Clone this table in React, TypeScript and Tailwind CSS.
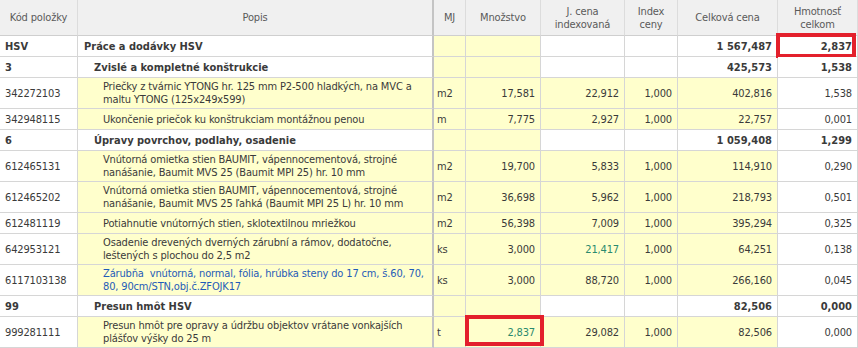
import React from "react";

type Row = {
  kind: "sec" | "item";
  code: string;
  level?: number;
  desc: string[];
  descBlue?: boolean;
  mj?: string;
  qty?: string;
  qtyGreen?: boolean;
  qtyBox?: boolean;
  price?: string;
  priceGreen?: boolean;
  idx?: string;
  total: string;
  weight: string;
  weightBox?: boolean;
};

const rows: Row[] = [
  { kind: "sec", code: "HSV", level: 0, desc: ["Práce a dodávky HSV"], total: "1 567,487", weight: "2,837", weightBox: true },
  { kind: "sec", code: "3", level: 1, desc: ["Zvislé a kompletné konštrukcie"], total: "425,573", weight: "1,538" },
  { kind: "item", code: "342272103", desc: ["Priečky z tvárnic YTONG hr. 125 mm P2-500 hladkých, na MVC a", "maltu YTONG (125x249x599)"], mj: "m2", qty: "17,581", price: "22,912", idx: "1,000", total: "402,816", weight: "1,538" },
  { kind: "item", code: "342948115", desc: ["Ukončenie priečok ku konštrukciam montážnou penou"], mj: "m", qty: "7,775", price: "2,927", idx: "1,000", total: "22,757", weight: "0,001" },
  { kind: "sec", code: "6", level: 1, desc: ["Úpravy povrchov, podlahy, osadenie"], total: "1 059,408", weight: "1,299" },
  { kind: "item", code: "612465131", desc: ["Vnútorná omietka stien BAUMIT, vápennocementová, strojné", "nanášanie, Baumit MVS 25 (Baumit MPI 25) hr. 10 mm"], mj: "m2", qty: "19,700", price: "5,833", idx: "1,000", total: "114,910", weight: "0,290" },
  { kind: "item", code: "612465202", desc: ["Vnútorná omietka stien BAUMIT, vápennocementová, strojné", "nanášanie, Baumit MVS 25 ľahká (Baumit MPI 25 L) hr. 10 mm"], mj: "m2", qty: "36,698", price: "5,962", idx: "1,000", total: "218,793", weight: "0,501" },
  { kind: "item", code: "612481119", desc: ["Potiahnutie vnútorných stien, sklotextilnou mriežkou"], mj: "m2", qty: "56,398", price: "7,009", idx: "1,000", total: "395,294", weight: "0,325" },
  { kind: "item", code: "642953121", desc: ["Osadenie drevených dverných zárubní a rámov, dodatočne,", "leštených s plochou do 2,5 m2"], mj: "ks", qty: "3,000", price: "21,417", priceGreen: true, idx: "1,000", total: "64,251", weight: "0,138" },
  { kind: "item", code: "6117103138", desc: ["Zárubňa  vnútorná, normal, fólia, hrúbka steny do 17 cm, š.60, 70,", "80, 90cm/STN,obj.č.ZFOJK17"], descBlue: true, mj: "ks", qty: "3,000", price: "88,720", idx: "1,000", total: "266,160", weight: "0,045" },
  { kind: "sec", code: "99", level: 1, desc: ["Presun hmôt HSV"], total: "82,506", weight: "0,000" },
  { kind: "item", code: "999281111", desc: ["Presun hmôt pre opravy a údržbu objektov vrátane vonkajších", "plášťov výšky do 25 m"], mj: "t", qty: "2,837", qtyGreen: true, qtyBox: true, price: "29,082", idx: "1,000", total: "82,506", weight: "0,000" },
];

const cellBase = "border-r border-b border-[#d6d6d6] flex items-center overflow-hidden whitespace-pre";
const Y = "bg-[#ffffcc]";
const W = "bg-white";

function Cell({ className, children, h }: { className: string; children?: React.ReactNode; h: string }) {
  return <div className={`${cellBase} ${h} ${className}`}>{children}</div>;
}

export default function App() {
  return (
    <div
      className="w-[858px] h-[348px] overflow-hidden bg-white text-[#3a3a3a] text-[11px] leading-[13px] tracking-[-0.15px]"
      style={{ fontFamily: "Tahoma, 'DejaVu Sans Condensed', 'DejaVu Sans', sans-serif", fontStretch: "condensed" }}
    >
      <div className="grid grid-cols-[78px_356px_32px_75px_84px_53px_100px_80px]">
        {[
          ["Kód položky"],
          ["Popis"],
          ["MJ"],
          ["Množstvo"],
          ["J. cena", "indexovaná"],
          ["Index", "ceny"],
          ["Celková cena"],
          ["Hmotnosť", "celkom"],
        ].map((lines, i) => (
          <div
            key={i}
            className={`h-[36px] bg-[#f0f0f0] border-b border-[#cfcfcf] ${i === 1 ? "border-r-2 border-r-[#c4c4c4]" : "border-r border-r-[#dcdcdc]"} flex flex-col items-center justify-center text-center text-[#5a5a5a]`}
          >
            {lines.map((l, j) => (
              <span key={j}>{l}</span>
            ))}
          </div>
        ))}

        {rows.map((r, i) => {
          const h = r.desc.length > 1 ? "h-[31px]" : "h-[21px]";
          const sec = r.kind === "sec";
          const pl = sec ? (r.level === 0 ? "pl-[6px]" : "pl-[16px]") : "pl-[25px]";
          const bold = sec ? "font-bold tracking-normal" : "";
          return (
            <React.Fragment key={i}>
              <Cell h={h} className={`${W} pl-[5px] ${bold}`}>
                {r.code}
              </Cell>
              <div
                className={`${h} border-b border-[#d6d6d6] border-r-2 border-r-[#c4c4c4] flex flex-col justify-center overflow-hidden whitespace-pre ${pl} ${sec ? `${W} ${bold}` : Y} ${r.descBlue ? "text-[#1f5cb8]" : ""}`}
              >
                {r.desc.map((d, j) => (
                  <span key={j}>{d}</span>
                ))}
              </div>
              <Cell h={h} className={`${Y} pl-[3px]`}>{r.mj}</Cell>
              <Cell h={h} className={`${Y} justify-end pr-[5px] relative overflow-visible ${r.qtyGreen ? "text-[#2a8a6e]" : ""}`}>
                {r.qty}
                {r.qtyBox && (
                  <div className="absolute left-[-1px] right-[-4px] top-[-2px] bottom-[1px] border-[4px] border-[#e3202c]" />
                )}
              </Cell>
              <Cell h={h} className={`${sec ? W : Y} justify-end pr-[5px] ${r.priceGreen ? "text-[#2a8a6e]" : ""}`}>
                {r.price}
              </Cell>
              <Cell h={h} className={`${sec ? W : Y} justify-end pr-[5px]`}>{r.idx}</Cell>
              <Cell h={h} className={`${sec ? W : Y} justify-end pr-[5px] ${bold}`}>{r.total}</Cell>
              <Cell h={h} className={`${W} justify-end pr-[5px] relative overflow-visible ${bold}`}>
                {r.weight}
                {r.weightBox && (
                  <div className="absolute left-[-2px] right-[1px] top-[-3px] bottom-[-2px] border-[4px] border-[#e3202c]" />
                )}
              </Cell>
            </React.Fragment>
          );
        })}
      </div>
    </div>
  );
}
